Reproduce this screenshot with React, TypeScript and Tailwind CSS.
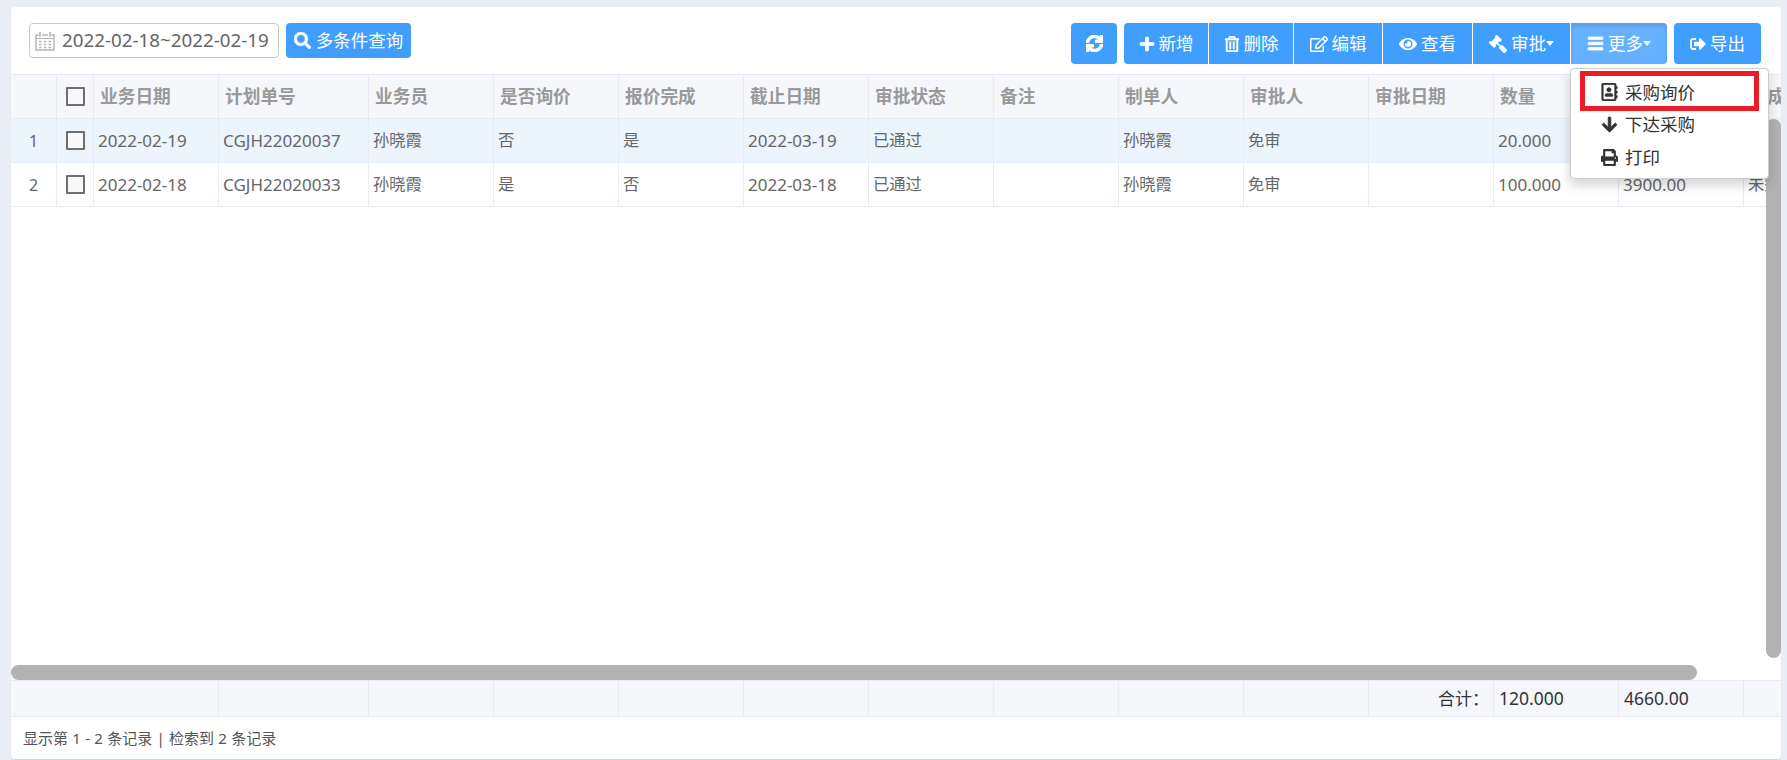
import type { ReactNode } from "react";
import {
  FaArrowDown,
  FaBars,
  FaEye,
  FaGavel,
  FaPlus,
  FaPrint,
  FaRegAddressBook,
  FaRegEdit,
  FaRegTrashAlt,
  FaSearch,
  FaSignOutAlt,
  FaSync,
} from "react-icons/fa";

const COLUMNS = [
  { title: "业务日期", width: "w-[125px]" },
  { title: "计划单号", width: "w-[150px]" },
  { title: "业务员", width: "w-[125px]" },
  { title: "是否询价", width: "w-[125px]" },
  { title: "报价完成", width: "w-[125px]" },
  { title: "截止日期", width: "w-[125px]" },
  { title: "审批状态", width: "w-[125px]" },
  { title: "备注", width: "w-[125px]" },
  { title: "制单人", width: "w-[125px]" },
  { title: "审批人", width: "w-[125px]" },
  { title: "审批日期", width: "w-[125px]" },
  { title: "数量", width: "w-[125px]" },
  { title: "金额", width: "w-[125px]" },
  { title: "完成状态", width: "w-[125px]" },
];

const ROWS = [
  {
    no: "1",
    active: true,
    cells: ["2022-02-19", "CGJH22020037", "孙晓霞", "否", "是", "2022-03-19", "已通过", "", "孙晓霞", "免审", "", "20.000", "760.00", "未完成"],
  },
  {
    no: "2",
    active: false,
    cells: ["2022-02-18", "CGJH22020033", "孙晓霞", "是", "否", "2022-03-18", "已通过", "", "孙晓霞", "免审", "", "100.000", "3900.00", "未完成"],
  },
];

const FONT = "font-['Noto_Sans','Noto_Sans_CJK_SC',sans-serif]";

function Caret() {
  return <span className="inline-block border-x-[4px] border-t-[5px] border-x-transparent border-t-white" />;
}

function ToolButton({ icon, label, caret, className = "" }: { icon: ReactNode; label: string; caret?: boolean; className?: string }) {
  return (
    <button
      type="button"
      className={`flex h-full items-center justify-center gap-[4px] bg-[#409eff] text-[17.5px] text-white ${className}`}
    >
      {icon}
      <span className="flex items-center">
        {label}
        {caret && <Caret />}
      </span>
    </button>
  );
}

function Checkbox() {
  return (
    <input
      type="checkbox"
      className="h-[19px] w-[19px] appearance-none rounded-[1px] border-2 border-[#6f6f6f] bg-[#f8f8f8]"
    />
  );
}

function CalendarIcon() {
  return (
    <svg viewBox="0 0 20 20" className="h-[20px] w-[20px] shrink-0" fill="none" stroke="#b4b4b4">
      <path d="M1 4h2.5M7 4h6M16.5 4H19v15H1V4" strokeWidth="1.4" />
      <path d="M5 1v5M15 1v5" strokeWidth="1.6" />
      <path d="M1 7.5h18" strokeWidth="1" />
      <path d="M4 10.5h2.5M8.8 10.5h2.5M13.6 10.5h2.5M4 13.5h2.5M8.8 13.5h2.5M13.6 13.5h2.5M4 16.5h2.5M8.8 16.5h2.5M13.6 16.5h2.5" strokeWidth="1.6" />
    </svg>
  );
}

function Toolbar() {
  return (
    <div className="flex h-[67px] shrink-0 items-start justify-between pl-[18px] pr-[20px] pt-[16px]">
      <div className="flex items-start gap-[7px]">
        <div className="flex h-[35px] w-[250px] items-center gap-[7px] rounded-[4px] border border-[#c8c8c8] pl-[5px] text-[18.8px] leading-none text-[#666]">
          <CalendarIcon />
          <span className="whitespace-nowrap">2022-02-18~2022-02-19</span>
        </div>
        <button
          type="button"
          className="flex h-[35px] w-[125px] items-center justify-center gap-[5px] rounded-[4px] bg-[#409eff] text-[17.5px] text-white"
        >
          <FaSearch className="h-[17px] w-[17px] [stroke-width:16]" />
          多条件查询
        </button>
      </div>
      <div className="flex h-[41px] items-start">
        <button type="button" className="mr-[7px] flex h-full w-[46px] items-center justify-center rounded-[4px] bg-[#409eff] text-white">
          <FaSync className="h-[17px] w-[17px] [stroke-width:36]" />
        </button>
        <div className="mr-[7px] flex h-full overflow-hidden rounded-[4px]">
          <ToolButton className="w-[85px] border-r border-white" icon={<FaPlus className="h-[16px] w-[16px] [stroke-width:24]" />} label="新增" />
          <ToolButton className="w-[85px] border-r border-white" icon={<FaRegTrashAlt className="h-[16px] w-[16px] [stroke-width:16]" />} label="删除" />
          <ToolButton className="w-[89px] border-r border-white" icon={<FaRegEdit className="h-[18px] w-[18px]" />} label="编辑" />
          <ToolButton className="w-[90px] border-r border-white" icon={<FaEye className="h-[18px] w-[18px]" />} label="查看" />
          <ToolButton className="w-[98px] border-r border-white" caret icon={<FaGavel className="h-[18px] w-[18px] -scale-x-100" />} label="审批" />
          <ToolButton
            className="w-[96px] !bg-[#66b1ff] shadow-[inset_0_3px_5px_rgba(0,0,0,0.125)]"
            caret
            icon={<FaBars className="h-[17px] w-[17px] [stroke-width:24]" />}
            label="更多"
          />
        </div>
        <ToolButton
          className="w-[87px] rounded-[4px]"
          icon={<FaSignOutAlt className="h-[16px] w-[16px]" />}
          label="导出"
        />
      </div>
    </div>
  );
}

function Cell({ className = "", children }: { className?: string; children?: ReactNode }) {
  return (
    <div className={`flex h-full shrink-0 items-center whitespace-nowrap border-r border-[#e8ebf2] ${className}`}>
      {children}
    </div>
  );
}

function DataTable() {
  return (
    <div className="min-h-0 flex-1 overflow-hidden border-t border-[#e8ebf2]">
      <div className="flex h-[44px] w-max border-b border-[#e8ebf2] bg-[#f5f7fb] text-[17.7px] font-bold text-[#999]">
        <Cell className="w-[46px]" />
        <Cell className="w-[37px] justify-center">
          <Checkbox />
        </Cell>
        {COLUMNS.map((col) => (
          <Cell key={col.title} className={`${col.width} pl-[6px]`}>
            {col.title}
          </Cell>
        ))}
      </div>
      {ROWS.map((row) => (
        <div
          key={row.no}
          className={`flex h-[44px] w-max border-b border-[#e8ebf2] text-[#666] ${row.active ? "bg-[#ecf4fe]" : "bg-white"}`}
        >
          <Cell className="w-[46px] justify-center text-[16px]">{row.no}</Cell>
          <Cell className="w-[37px] justify-center">
            <Checkbox />
          </Cell>
          {row.cells.map((text, i) => (
            <Cell
              key={i}
              className={`${COLUMNS[i].width} pl-[4px] ${/^[\x00-\x7f]+$/.test(text) ? "text-[17px]" : "text-[16.3px]"}`}
            >
              {text}
            </Cell>
          ))}
        </div>
      ))}
    </div>
  );
}

function TotalRow() {
  return (
    <div className="flex h-[37px] shrink-0 overflow-hidden border-y border-[#e8ebf2] bg-[#f5f7fb] text-[17.5px] text-[#333]">
      <Cell className="w-[208px]" />
      <Cell className="w-[150px]" />
      <Cell className="w-[125px]" />
      <Cell className="w-[125px]" />
      <Cell className="w-[125px]" />
      <Cell className="w-[125px]" />
      <Cell className="w-[125px]" />
      <Cell className="w-[125px]" />
      <Cell className="w-[125px]" />
      <Cell className="w-[125px]" />
      <Cell className="w-[125px] justify-end pr-[4px] text-[17px]">合计：</Cell>
      <Cell className="w-[125px] pl-[5px]">120.000</Cell>
      <Cell className="w-[125px] pl-[5px]">4660.00</Cell>
      <Cell className="w-[125px]" />
    </div>
  );
}

function MoreMenu() {
  return (
    <div className="absolute left-[1559px] top-[61px] w-[199px] rounded-[4px] border border-[#ccc] bg-white pb-[5px] pt-[7px] text-[17.5px] text-[#333] shadow-[0_6px_12px_rgba(0,0,0,0.175)]">
      <div className="flex h-[32px] items-center gap-[7px] pl-[30px]">
        <FaRegAddressBook className="h-[18px] w-[17px] [stroke-width:12]" />
        采购询价
      </div>
      <div className="flex h-[33px] items-center gap-[7px] pl-[30px]">
        <FaArrowDown className="h-[17px] w-[17px] [stroke-width:24]" />
        下达采购
      </div>
      <div className="flex h-[32px] items-center gap-[7px] pl-[30px]">
        <FaPrint className="h-[17px] w-[17px]" />
        打印
      </div>
      {/* annotation drawn on the screenshot */}
      <div className="absolute left-[9px] top-[2px] h-[40px] w-[179px] border-[5px] border-[#ed1c24]" />
    </div>
  );
}

export default function App() {
  return (
    <div className={`h-[760px] w-[1787px] overflow-hidden bg-[#e9edf6] pl-[11px] pr-[6px] pt-[7px] ${FONT}`}>
      <div className="relative flex h-[752px] flex-col overflow-hidden rounded-[4px] bg-white shadow-[0_1px_1px_rgba(0,0,0,0.1)]">
        <Toolbar />
        <DataTable />
        <TotalRow />
        <div className="flex h-[42px] shrink-0 items-center pl-[12px] text-[15px] text-[#555] [word-spacing:0.4px]">
          显示第 1 - 2 条记录 | 检索到 2 条记录
        </div>
        <div className="absolute left-0 top-[658px] h-[15px] w-[1686px] rounded-full bg-[#b2b2b2]" />
        <div className="absolute right-0 top-[112px] h-[539px] w-[15px] rounded-full bg-[#b2b2b2]" />
        <MoreMenu />
      </div>
    </div>
  );
}
